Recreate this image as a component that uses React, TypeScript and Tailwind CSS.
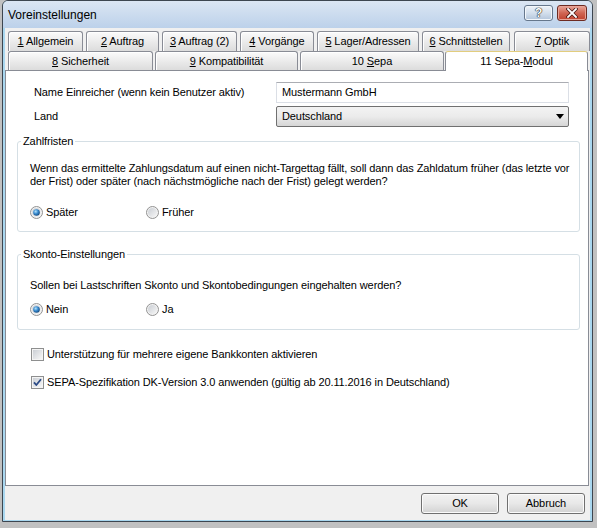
import React from "react";

const font = "font-['Liberation_Sans',Arial,sans-serif]";

// label with an underlined mnemonic letter
const Mn = ({ pre = "", u, post = "" }: { pre?: string; u: string; post?: string }) => (
  <span>
    {pre}
    <span className="underline underline-offset-[1px]">{u}</span>
    {post}
  </span>
);

const Tab = ({ w, ml, h, children }: { w: string; ml: string; h: string; children: React.ReactNode }) => (
  <div
    className={`${w} ${ml} ${h} flex shrink-0 items-center justify-center rounded-t-[3px] border border-b-0 border-[#898c95] bg-gradient-to-b from-[#fbfbfb] to-[#dcdcdc] shadow-[inset_1px_1px_0_#fff] text-black`}
  >
    {children}
  </div>
);

const Radio = ({ checked }: { checked?: boolean }) => (
  <svg width="13" height="13" viewBox="0 0 13 13" className="shrink-0">
    <defs>
      <linearGradient id="ro" x1="0" y1="0" x2="1" y2="1">
        <stop offset="0" stopColor="#c9cdd3" />
        <stop offset="1" stopColor="#f7f7f7" />
      </linearGradient>
      <radialGradient id="rd" cx="0.38" cy="0.35" r="0.75">
        <stop offset="0" stopColor="#b4e2fa" />
        <stop offset="0.45" stopColor="#3a8cd0" />
        <stop offset="1" stopColor="#0c3c6e" />
      </radialGradient>
    </defs>
    <circle cx="6.5" cy="6.5" r="6" fill="#f2f2f2" stroke="#929292" />
    <circle cx="6.5" cy="6.5" r="4.5" fill="url(#ro)" />
    {checked && <circle cx="6.5" cy="6.5" r="3.3" fill="url(#rd)" />}
  </svg>
);

const Check = ({ checked }: { checked?: boolean }) => (
  <svg width="13" height="13" viewBox="0 0 13 13" className="shrink-0">
    <defs>
      <linearGradient id="cb" x1="0" y1="0" x2="1" y2="1">
        <stop offset="0" stopColor="#cbcfd5" />
        <stop offset="1" stopColor="#f6f6f6" />
      </linearGradient>
    </defs>
    <rect x="0.5" y="0.5" width="12" height="12" fill="#f4f4f4" stroke="#8e8f8f" />
    <rect x="2" y="2" width="9" height="9" fill="url(#cb)" />
    {checked && (
      <path d="M3 6.3 L5.3 9 L10 3.2" fill="none" stroke="#2b4a86" strokeWidth="1.8" strokeLinejoin="round" />
    )}
  </svg>
);

const GroupBox = ({ legend, className, children }: { legend: string; className: string; children: React.ReactNode }) => (
  <div className={`relative ml-[11px] w-[563px] rounded-[3px] border border-[#d5dfe5] ${className}`}>
    <span className="absolute left-[3px] top-[-7px] bg-white px-[2px] leading-[13px]">{legend}</span>
    {children}
  </div>
);

const WinButton = ({ children, className = "" }: { children: React.ReactNode; className?: string }) => (
  <div
    className={`flex h-[21px] w-[78px] items-center justify-center rounded-[3px] border border-[#707070] bg-gradient-to-b from-[#f2f2f2] via-[#e8e8e8] to-[#d2d2d2] shadow-[inset_0_0_0_1px_#fbfbfb] ${className}`}
  >
    {children}
  </div>
);

export default function App() {
  return (
    <div className={`h-[528px] w-[597px] bg-[#c1c1c1] text-[11px] tracking-[-0.1px] text-black ${font}`}>
      {/* window */}
      <div className="ml-[2px] flex h-[522px] w-[591px] flex-col rounded-t-[6px] border border-[#3d4650] bg-[#a9d7ef]">
        {/* title bar */}
        <div className="flex h-[27px] shrink-0 items-center rounded-t-[5px] bg-gradient-to-b from-[#dbe6f3] to-[#bcd1ea] pl-[5px] pr-[5px]">
          <span className="text-[12px] tracking-normal">Voreinstellungen</span>
          <div className="ml-auto mt-[-3px] flex gap-[4px]">
            <div className="flex h-[16px] w-[29px] items-center justify-center rounded-[3px] border border-[#66778c] bg-gradient-to-b from-[#eef3f9] via-[#d3dfec] to-[#b3c5db] shadow-[inset_0_0_0_1px_#f3f7fb]">
              <span className="text-[12px] font-bold leading-none text-white [text-shadow:0_0_1px_#222,0_0_1px_#222,0_0_1px_#222]">?</span>
            </div>
            <div className="flex h-[16px] w-[30px] items-center justify-center rounded-[3px] border border-[#6e2b22] bg-gradient-to-b from-[#e9a699] via-[#cf6553] to-[#c0412e] shadow-[inset_0_0_0_1px_#e7a497]">
              <svg width="12" height="10" viewBox="0 0 12 10">
                <path d="M2 1 L10 9 M10 1 L2 9" stroke="#4a1a14" strokeWidth="3.4" strokeLinecap="square" />
                <path d="M2 1 L10 9 M10 1 L2 9" stroke="#fff" strokeWidth="1.8" strokeLinecap="square" />
              </svg>
            </div>
          </div>
        </div>

        {/* client area */}
        <div className="mx-[2px] mb-[1px] flex flex-1 flex-col bg-[#f0f0f0] pt-[3px]">
          {/* tab row 1 */}
          <div className="flex h-[20px]">
            <Tab w="w-[75px]" ml="ml-[3px]" h="h-[20px]"><Mn u="1" post=" Allgemein" /></Tab>
            <Tab w="w-[73px]" ml="ml-[3px]" h="h-[20px]"><Mn u="2" post=" Auftrag" /></Tab>
            <Tab w="w-[75px]" ml="ml-[3px]" h="h-[20px]"><Mn u="3" post=" Auftrag (2)" /></Tab>
            <Tab w="w-[74px]" ml="ml-[3px]" h="h-[20px]"><Mn u="4" post=" Vorgänge" /></Tab>
            <Tab w="w-[102px]" ml="ml-[3px]" h="h-[20px]"><Mn u="5" post=" Lager/Adressen" /></Tab>
            <Tab w="w-[88px]" ml="ml-[3px]" h="h-[20px]"><Mn u="6" post=" Schnittstellen" /></Tab>
            <Tab w="w-[76px]" ml="ml-[4px]" h="h-[20px]"><Mn u="7" post=" Optik" /></Tab>
          </div>
          {/* tab row 2 */}
          <div className="relative z-10 flex h-[19px]">
            <Tab w="w-[145px]" ml="ml-[3px]" h="h-[19px]"><Mn u="8" post=" Sicherheit" /></Tab>
            <Tab w="w-[143px]" ml="ml-[2px]" h="h-[19px]"><Mn u="9" post=" Kompatibilität" /></Tab>
            <Tab w="w-[144px]" ml="ml-[2px]" h="h-[19px]"><Mn pre="10 " u="S" post="epa" /></Tab>
            <div className="ml-[1px] flex h-[20px] w-[143px] shrink-0 items-center justify-center rounded-t-[3px] border border-b-0 border-[#898c95] border-t-[#e2cd7e] bg-white">
              <Mn pre="11 Sepa-" u="M" post="odul" />
            </div>
          </div>

          {/* panel */}
          <div className="flex h-[416px] w-[584px] flex-col border border-[#898c95] bg-white">
            <div className="mt-[11px] flex h-[21px] items-center pl-[28px]">
              <span className="w-[242px]">Name Einreicher (wenn kein Benutzer aktiv)</span>
              <div className="flex h-[21px] w-[293px] items-center border border-[#dbdfe6] border-t-[#abadb3] bg-white pl-[5px]">
                Mustermann GmbH
              </div>
            </div>
            <div className="mt-[3px] flex h-[21px] items-center pl-[28px]">
              <span className="w-[242px]">Land</span>
              <div className="flex h-[21px] w-[293px] items-center rounded-[2px] border border-[#707070] bg-gradient-to-b from-[#f3f3f3] via-[#ebebeb] to-[#d6d6d6] pl-[5px] pr-[4px]">
                <span>Deutschland</span>
                <svg width="8" height="5" viewBox="0 0 8 5" className="ml-auto">
                  <path d="M0 0 H8 L4 5 Z" fill="#000" />
                </svg>
              </div>
            </div>

            <GroupBox legend="Zahlfristen" className="mt-[14px] h-[91px] pl-[12px] pt-[20px]">
              <p className="leading-[13px]">
                Wenn das ermittelte Zahlungsdatum auf einen nicht-Targettag fällt, soll dann das Zahldatum früher (das letzte vor
                <br />
                der Frist) oder später (nach nächstmögliche nach der Frist) gelegt werden?
              </p>
              <div className="mt-[18px] flex h-[13px] items-center">
                <div className="flex w-[116px] items-center gap-[3px]">
                  <Radio checked />
                  <span>Später</span>
                </div>
                <div className="flex items-center gap-[3px]">
                  <Radio />
                  <span>Früher</span>
                </div>
              </div>
            </GroupBox>

            <GroupBox legend="Skonto-Einstellungen" className="mt-[22px] h-[76px] pl-[12px] pt-[24px]">
              <p className="leading-[13px]">Sollen bei Lastschriften Skonto und Skontobedingungen eingehalten werden?</p>
              <div className="mt-[11px] flex h-[13px] items-center">
                <div className="flex w-[116px] items-center gap-[3px]">
                  <Radio checked />
                  <span>Nein</span>
                </div>
                <div className="flex items-center gap-[3px]">
                  <Radio />
                  <span>Ja</span>
                </div>
              </div>
            </GroupBox>

            <div className="ml-[25px] mt-[18px] flex h-[13px] items-center gap-[3px]">
              <Check />
              <span>Unterstützung für mehrere eigene Bankkonten aktivieren</span>
            </div>
            <div className="ml-[25px] mt-[15px] flex h-[13px] items-center gap-[3px]">
              <Check checked />
              <span>SEPA-Spezifikation DK-Version 3.0 anwenden (gültig ab 20.11.2016 in Deutschland)</span>
            </div>
          </div>

          {/* buttons */}
          <div className="mt-[7px] flex justify-end gap-[8px] pr-[5px]">
            <WinButton>OK</WinButton>
            <WinButton>Abbruch</WinButton>
          </div>
        </div>
      </div>
    </div>
  );
}
